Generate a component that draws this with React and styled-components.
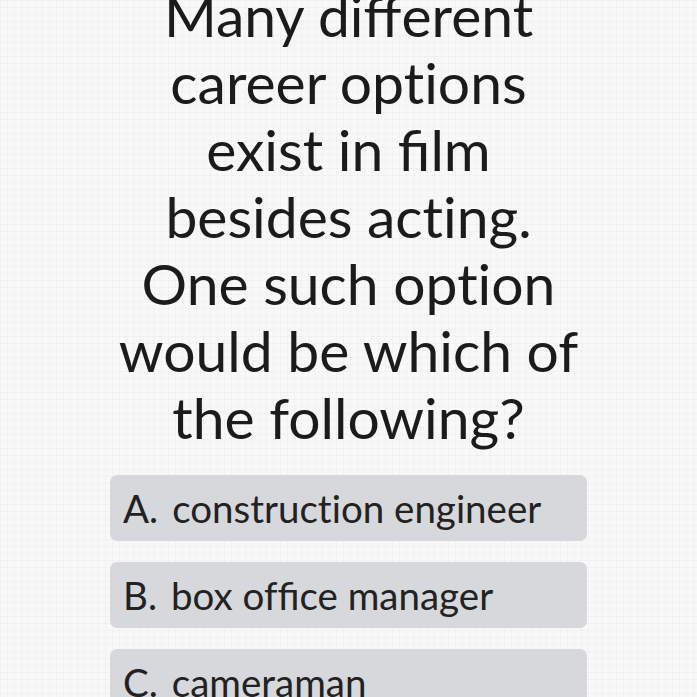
import React from 'react'
import styled, { createGlobalStyle } from 'styled-components'

const GlobalStyle = createGlobalStyle`
  html, body {
    margin: 0;
    padding: 0;
    height: 100%;
    overflow: hidden;
  }
  body {
    background-color: #f8f8f9;
    background-image:
      linear-gradient(to right, rgba(0, 0, 0, 0.022) 1px, transparent 1px),
      linear-gradient(to bottom, rgba(0, 0, 0, 0.022) 1px, transparent 1px);
    background-size: 7px 7px;
    font-family: Lato, "Noto Sans", sans-serif;
    font-variant-ligatures: none;
    font-feature-settings: "liga" 0, "dlig" 0, "clig" 0;
  }
`

const Page = styled.main`
  display: flex;
  flex-direction: column;
  align-items: center;
  margin-top: -18px;
`

const Question = styled.h1`
  margin: 0;
  text-align: center;
  font-size: 57px;
  font-weight: 400;
  line-height: 67px;
  color: #1b1b1b;
`

const Line = styled.span`
  display: block;
  white-space: nowrap;
`

// only "fi" and "ff" keep their ligatures, as in the screenshot
const Lig = styled.span`
  font-variant-ligatures: common-ligatures;
  font-feature-settings: "liga" 1;
`

const Choices = styled.ul`
  list-style: none;
  margin: 24px 0 0;
  padding: 0;
  width: 477px;
  display: flex;
  flex-direction: column;
  gap: 21px;
`

const Choice = styled.li`
  display: flex;
  align-items: center;
  height: 66px;
  padding: 0 13px;
  border-radius: 7px;
  background: #d6d8dc;
  font-size: 38.5px;
  color: #222;
  white-space: nowrap;
`

const Letter = styled.span`
  margin-right: 14px;
`

const lines = [
  <>Many di<Lig>ff</Lig>erent</>,
  'career options',
  <>exist in <Lig>fi</Lig>lm</>,
  'besides acting.',
  'One such option',
  'would be which of',
  'the following?',
]

const choices = [
  ['A.', 'construction engineer'],
  ['B.', <>box of<Lig>fi</Lig>ce manager</>],
  ['C.', 'cameraman'],
]

function App() {
  return (
    <>
      <GlobalStyle />
      <Page>
        <Question>
          {lines.map((l, i) => (
            <Line key={i}>{l}</Line>
          ))}
        </Question>
        <Choices>
          {choices.map(([letter, text]) => (
            <Choice key={letter}>
              <Letter>{letter}</Letter>
              <span>{text}</span>
            </Choice>
          ))}
        </Choices>
      </Page>
    </>
  )
}

export default App
